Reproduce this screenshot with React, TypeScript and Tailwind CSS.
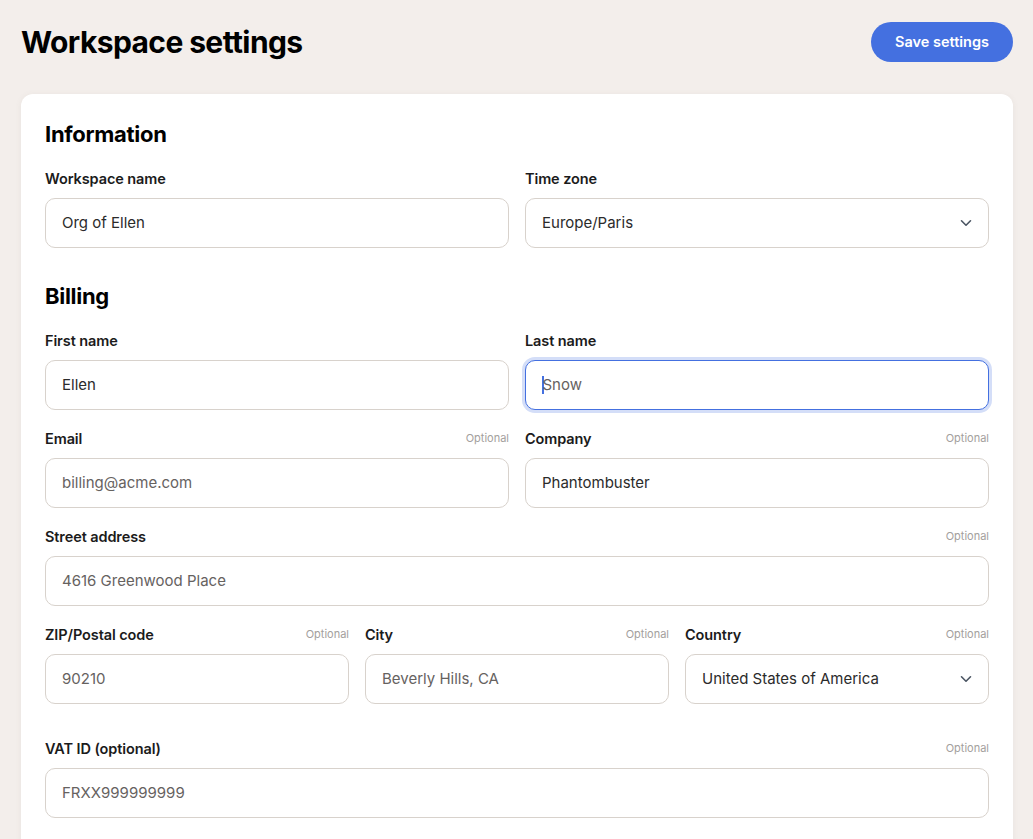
import React from "react";

type FieldProps = {
  label: string;
  value: string;
  optional?: boolean;
  muted?: boolean;
  select?: boolean;
  focused?: boolean;
};

function Chevron() {
  return (
    <svg width="12" height="8" viewBox="0 0 12 8" fill="none" className="shrink-0">
      <path d="M1.5 1.75L6 6.25L10.5 1.75" stroke="#4b5563" strokeWidth="1.6" strokeLinecap="round" strokeLinejoin="round" />
    </svg>
  );
}

function Field({ label, value, optional, muted, select, focused }: FieldProps) {
  return (
    <div className="flex flex-col min-w-0">
      <div className="flex items-center justify-between h-[19px] mb-[10px]">
        <span className="text-[14.5px] font-semibold text-[#1b1b1b] tracking-[-0.1px]">{label}</span>
        {optional && <span className="text-[11px] text-[#a3a09d]">Optional</span>}
      </div>
      <div
        className={
          focused
            ? "h-[50px] rounded-[10px] border border-[#4470e0] ring-[3px] ring-[#d4def8] bg-white flex items-center px-[16px]"
            : "h-[50px] rounded-[10px] border border-[#d8d2cc] bg-white flex items-center justify-between px-[16px]"
        }
      >
        <span className={"flex items-center text-[15px] " + (muted ? "text-[#66625f]" : "text-[#2b2b2b]")}>
          {focused && <span className="inline-block w-[1.5px] h-[18px] bg-[#4470e0] mr-[-1px]" />}
          {value}
        </span>
        {select && <span className="flex items-center"><Chevron /></span>}
      </div>
    </div>
  );
}

export default function App() {
  return (
    <div
      className="min-h-screen bg-[#f3eeeb] px-[20px] pt-[22px] pb-[40px]"
      style={{ fontFamily: "Inter, 'Noto Sans', sans-serif" }}
    >
      <div className="flex items-center justify-between h-[40px]">
        <h1 className="text-[30px] font-bold text-black tracking-[-0.6px] pl-[1px]">Workspace settings</h1>
        <button className="h-[40px] w-[142px] rounded-full bg-[#4470e0] text-white text-[14.5px] font-semibold">
          Save settings
        </button>
      </div>

      <div className="mt-[32px] ml-[1px] bg-white rounded-[12px] shadow-[0_1px_6px_rgba(120,100,90,0.08)] px-[24px] pt-[24px] pb-[60px]">
        <h2 className="text-[22px] leading-[32px] font-bold text-black tracking-[-0.3px]">Information</h2>
        <div className="mt-[19px] grid grid-cols-2 gap-x-[16px]">
          <Field label="Workspace name" value="Org of Ellen" />
          <Field label="Time zone" value="Europe/Paris" select />
        </div>

        <h2 className="mt-[32px] text-[22px] leading-[32px] font-bold text-black tracking-[-0.3px]">Billing</h2>
        <div className="mt-[19px] flex flex-col gap-y-[19px]">
          <div className="grid grid-cols-2 gap-x-[16px]">
            <Field label="First name" value="Ellen" />
            <Field label="Last name" value="Snow" muted focused />
          </div>
          <div className="grid grid-cols-2 gap-x-[16px]">
            <Field label="Email" value="billing@acme.com" optional muted />
            <Field label="Company" value="Phantombuster" optional />
          </div>
          <Field label="Street address" value="4616 Greenwood Place" optional muted />
          <div className="grid grid-cols-3 gap-x-[16px]">
            <Field label="ZIP/Postal code" value="90210" optional muted />
            <Field label="City" value="Beverly Hills, CA" optional muted />
            <Field label="Country" value="United States of America" optional select />
          </div>
          <div className="mt-[16px]">
            <Field label="VAT ID (optional)" value="FRXX999999999" optional muted />
          </div>
        </div>
      </div>
    </div>
  );
}
